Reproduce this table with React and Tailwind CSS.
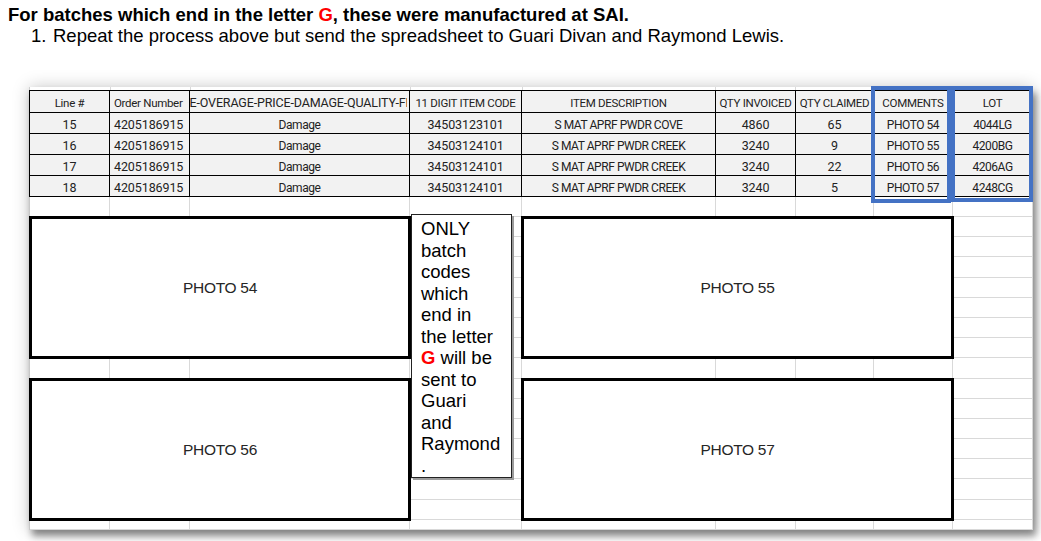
import React from "react";

const COL_W = ["w-[81px]", "w-[80px]", "w-[220px]", "w-[112px]", "w-[194px]", "w-[80px]", "w-[78px]", "w-[79px]", "w-[80px]"];
const GRID_COLS = "grid-cols-[80px_80px_220px_112px_194px_80px_78px_79px_80px]";
const COL_START = ["col-start-1", "col-start-2", "col-start-3", "col-start-4", "col-start-5", "col-start-6", "col-start-7", "col-start-8", "col-start-9"];
const ROW_START = [
  "row-start-1", "row-start-2", "row-start-3", "row-start-4", "row-start-5", "row-start-6",
  "row-start-7", "row-start-8", "row-start-9", "row-start-10", "row-start-11", "row-start-12",
  "row-start-13", "row-start-14", "row-start-15", "row-start-16", "row-start-17",
];

const headers = [
  "Line #",
  "Order Number",
  null,
  "11 DIGIT ITEM CODE",
  "ITEM DESCRIPTION",
  "QTY INVOICED",
  "QTY CLAIMED",
  "COMMENTS",
  "LOT",
];

// text columns get a tighter letter spacing, like the narrow Excel font
const TEXT_COLS = [2, 4, 7, 8];

const rows = [
  ["15", "4205186915", "Damage", "34503123101", "S MAT APRF PWDR COVE", "4860", "65", "PHOTO 54", "4044LG"],
  ["16", "4205186915", "Damage", "34503124101", "S MAT APRF PWDR CREEK", "3240", "9", "PHOTO 55", "4200BG"],
  ["17", "4205186915", "Damage", "34503124101", "S MAT APRF PWDR CREEK", "3240", "22", "PHOTO 56", "4206AG"],
  ["18", "4205186915", "Damage", "34503124101", "S MAT APRF PWDR CREEK", "3240", "5", "PHOTO 57", "4248CG"],
];

function Cell({ children, col, header }) {
  const align = col === 1 ? "justify-start pl-[4px]" : "justify-center";
  let type = "h-[21px] text-[12.5px] tracking-[-0.1px]";
  if (header) type = "h-[22px] text-[11.5px] tracking-[-0.3px]";
  else if (TEXT_COLS.includes(col)) type = "h-[21px] text-[12px] tracking-[-0.45px]";
  return (
    <div
      className={`flex items-center overflow-hidden whitespace-nowrap border-r border-b border-black bg-[#f2f2f2] pt-[4px] text-[#222] ${align} ${type}`}
    >
      {children}
    </div>
  );
}

function Photo({ label, area }) {
  return (
    <div className={`${area} -m-px flex items-center justify-center border-[3px] border-black bg-white`}>
      <span className="font-['Liberation_Sans',Arial,sans-serif] text-[15.5px] tracking-[-0.3px] text-[#262626]">{label}</span>
    </div>
  );
}

export default function App() {
  return (
    <div className="relative h-[541px] w-[1041px] overflow-hidden bg-white font-['Liberation_Sans',Arial,sans-serif] text-black">
      <div className="pl-2 pt-[4px]">
        <p className="text-[18.5px] font-bold leading-[21px]">
          For batches which end in the letter <span className="text-[#ff0000]">G</span>, these were manufactured at SAI.
        </p>
        <p className="flex pl-[23px] text-[18.5px] leading-[21px]">
          <span className="w-[22px]">1.</span>
          <span>Repeat the process above but send the spreadsheet to Guari Divan and Raymond Lewis.</span>
        </p>
      </div>

      {/* pasted spreadsheet picture */}
      <div className="ml-[29px] mt-[41px] flex h-[443px] w-[1004px] flex-col bg-white font-['Roboto',sans-serif] shadow-[0_0_16px_rgba(0,0,0,0.22),3px_6px_7px_rgba(0,0,0,0.42)]">
        <div className="flex h-[3px] border-l border-[#d0d0d0]">
          {COL_W.map((w, i) => (
            <div key={i} className={`${w} h-full border-r border-[#d9d9d9]`} />
          ))}
        </div>

        <div className={`grid ${GRID_COLS} border-t border-l border-black`}>
          {headers.map((h, i) => (
            <Cell key={i} col={i} header>
              {h ?? (
                <span className="-ml-[3px] w-[217px] shrink-0 overflow-hidden text-left text-[12.5px] tracking-[-0.15px]">
                  E-OVERAGE-PRICE-DAMAGE-QUALITY-FREIGHT
                </span>
              )}
            </Cell>
          ))}
          {rows.map((r, ri) => r.map((v, ci) => <Cell key={`${ri}-${ci}`} col={ci}>{v}</Cell>))}
        </div>

        <div className={`grid flex-1 ${GRID_COLS} grid-rows-[20px_repeat(15,20.2px)_1fr] border-l border-[#c8c8c8]`}>
          {COL_START.map((c, i) => (
            <div key={`c${i}`} className={`${c} row-span-full border-r border-[#d9d9d9]`} />
          ))}
          {ROW_START.map((r, i) => (
            <div key={`r${i}`} className={`${r} col-span-full border-b border-[#d9d9d9]`} />
          ))}
          <Photo label="PHOTO 54" area="col-start-1 col-end-4 row-start-2 row-end-9" />
          <Photo label="PHOTO 55" area="col-start-5 col-end-9 row-start-2 row-end-9" />
          <Photo label="PHOTO 56" area="col-start-1 col-end-4 row-start-10 row-end-17" />
          <Photo label="PHOTO 57" area="col-start-5 col-end-9 row-start-10 row-end-17" />
        </div>
      </div>

      {/* blue highlight frames */}
      <div className="absolute left-[871px] top-[86px] h-[117px] w-[80px] border-[4px] border-[#4472c4]" />
      <div className="absolute left-[951px] top-[86px] h-[116px] w-[82px] border-[4px] border-[#4472c4]" />

      {/* callout text box */}
      <div className="absolute left-[411px] top-[214px] h-[264px] w-[101px] border border-[#222] bg-white pl-[9px] pt-[3px] text-[18.5px] leading-[21.5px] text-black shadow-[2px_2px_0_#9c9c9c]">
        <div>ONLY</div>
        <div>batch</div>
        <div>codes</div>
        <div>which</div>
        <div>end in</div>
        <div>the letter</div>
        <div>
          <span className="font-bold text-[#ff0000]">G</span> will be
        </div>
        <div>sent to</div>
        <div>Guari</div>
        <div>and</div>
        <div>Raymond</div>
        <div>.</div>
      </div>
    </div>
  );
}
